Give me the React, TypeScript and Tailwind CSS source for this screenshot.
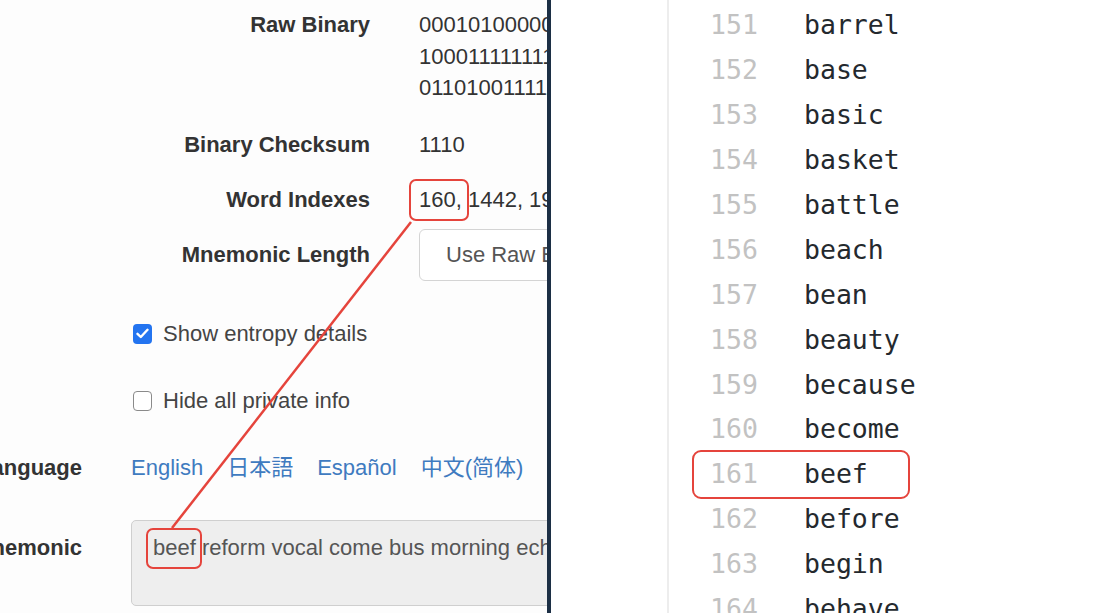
import React from 'react';

const sans = { fontFamily: '"Liberation Sans", "Noto Sans CJK JP", "Noto Sans CJK SC", sans-serif' };
const mono = { fontFamily: '"DejaVu Sans Mono", "Liberation Mono", monospace' };

const words: [number, string][] = [
  [151, 'barrel'],
  [152, 'base'],
  [153, 'basic'],
  [154, 'basket'],
  [155, 'battle'],
  [156, 'beach'],
  [157, 'bean'],
  [158, 'beauty'],
  [159, 'because'],
  [160, 'become'],
  [161, 'beef'],
  [162, 'before'],
  [163, 'begin'],
  [164, 'behave'],
];

const languages = ['English', '日本語', 'Español', '中文(简体)', '中文(繁體)'];

// Small annotation frame drawn around a piece of inline text
function Callout({ children, className }: { children: React.ReactNode; className: string }) {
  return (
    <span className="relative inline-block">
      {children}
      <span className={`pointer-events-none absolute rounded-[7px] border-[2.5px] border-[#e5443c] ${className}`} />
    </span>
  );
}

function DetailRow({ label, children, className = '' }: { label: string; children: React.ReactNode; className?: string }) {
  return (
    <div className={`grid grid-cols-[239px_1fr] gap-x-[49px] ${className}`}>
      <div className="flex justify-end whitespace-nowrap font-bold text-[#333]">{label}</div>
      <div className="whitespace-nowrap text-[#333]">{children}</div>
    </div>
  );
}

function Checkbox({ checked, label, className = '' }: { checked: boolean; label: string; className?: string }) {
  return (
    <label className={`ml-[133px] flex items-center gap-[11px] whitespace-nowrap text-[#444] ${className}`}>
      {checked ? (
        <span className="flex h-[20px] w-[19px] items-center justify-center rounded-[4px] bg-[#2374f0]">
          <svg width="13" height="11" viewBox="0 0 13 11" fill="none">
            <path d="M1.5 5.8 4.8 9 11.5 1.8" stroke="white" strokeWidth="2.4" strokeLinecap="round" strokeLinejoin="round" />
          </svg>
        </span>
      ) : (
        <span className="h-[20px] w-[19px] rounded-[4px] border-[1.5px] border-[#8a8a8a] bg-white" />
      )}
      {label}
    </label>
  );
}

export default function App() {
  return (
    <div className="relative flex h-[613px] w-[1103px] overflow-hidden bg-white text-[22px] leading-[32px]" style={sans}>
      {/* Left: bip39 form */}
      <section className="w-[547px] shrink-0 overflow-hidden bg-[#fdfdfd]">
        <div className="flex flex-col pt-[9px]">
          <div className="ml-[131px] flex flex-col">
            <DetailRow label="Raw Binary" className="leading-[31.5px]">
              <div>000101000000110100010</div>
              <div>100011111111010011001</div>
              <div>011010011111001000101</div>
            </DetailRow>
            <DetailRow label="Binary Checksum" className="mt-[25px]">
              1110
            </DetailRow>
            <DetailRow label="Word Indexes" className="mt-[23px]">
              <Callout className="-left-[10px] -right-[7px] -top-[5px] -bottom-[5px]">160,</Callout> 1442, 1956, 369, 245, 1152
            </DetailRow>
            <div className="mt-[13px] grid grid-cols-[239px_1fr] items-center gap-x-[49px]">
              <div className="flex justify-end whitespace-nowrap font-bold text-[#333]">Mnemonic Length</div>
              <div className="flex h-[52px] w-[320px] items-center rounded-[6px] border border-[#d4d4d4] bg-white pl-[26px] whitespace-nowrap text-[#555]">
                Use Raw Entropy (3 words per 32 bits)
              </div>
            </div>
          </div>

          <Checkbox checked label="Show entropy details" className="mt-[37px]" />
          <Checkbox checked={false} label="Hide all private info" className="mt-[35px]" />

          <div className="mt-[35px] grid grid-cols-[82px_1fr] gap-x-[49px]">
            <div className="flex justify-end whitespace-nowrap font-bold text-[#333]">Language</div>
            <div className="flex gap-[24px] whitespace-nowrap text-[#3f7bc0]">
              {languages.map((l) => (
                <span key={l}>{l}</span>
              ))}
            </div>
          </div>

          <div className="mt-[36px] grid grid-cols-[82px_1fr] items-start gap-x-[49px]">
            <div className="flex justify-end whitespace-nowrap pt-[12px] font-bold text-[#333]">Mnemonic</div>
            <div className="h-[86px] w-[480px] rounded-[5px] border border-[#cfcfcf] bg-[#eeeeee] pl-[21px] pt-[11px] whitespace-nowrap text-[#555]">
              <Callout className="-left-[7px] -right-[6px] -top-[4px] -bottom-[5px]">beef</Callout> reform vocal come bus morning echo
            </div>
          </div>
        </div>
      </section>

      <div className="w-[4px] shrink-0 bg-[#1c2f45]" />

      {/* Right: english word list */}
      <section className="flex flex-1 bg-white">
        <div className="ml-[116px] w-[2px] bg-[#ededed]" />
        <div className="ml-[23px] flex flex-col pt-[3px] text-[26.5px]" style={mono}>
          {words.map(([n, w]) => (
            <div key={n} className="relative flex h-[44.9px] w-[218px] shrink-0 items-center whitespace-nowrap">
              <span className="w-[112px] shrink-0 pl-[18px] text-[#c2c2c2]">{n}</span>
              <span className="text-[#24292e]">{w}</span>
              {n === 161 && (
                <span className="pointer-events-none absolute -top-[2px] -bottom-[2px] left-0 right-0 rounded-[9px] border-[2.5px] border-[#e5443c]" />
              )}
            </div>
          ))}
        </div>
      </section>

      {/* connector between index and word */}
      <svg className="pointer-events-none absolute inset-0" width="1103" height="613">
        <line x1="411" y1="222" x2="172" y2="528" stroke="#e5443c" strokeWidth="2.5" />
      </svg>
    </div>
  );
}
